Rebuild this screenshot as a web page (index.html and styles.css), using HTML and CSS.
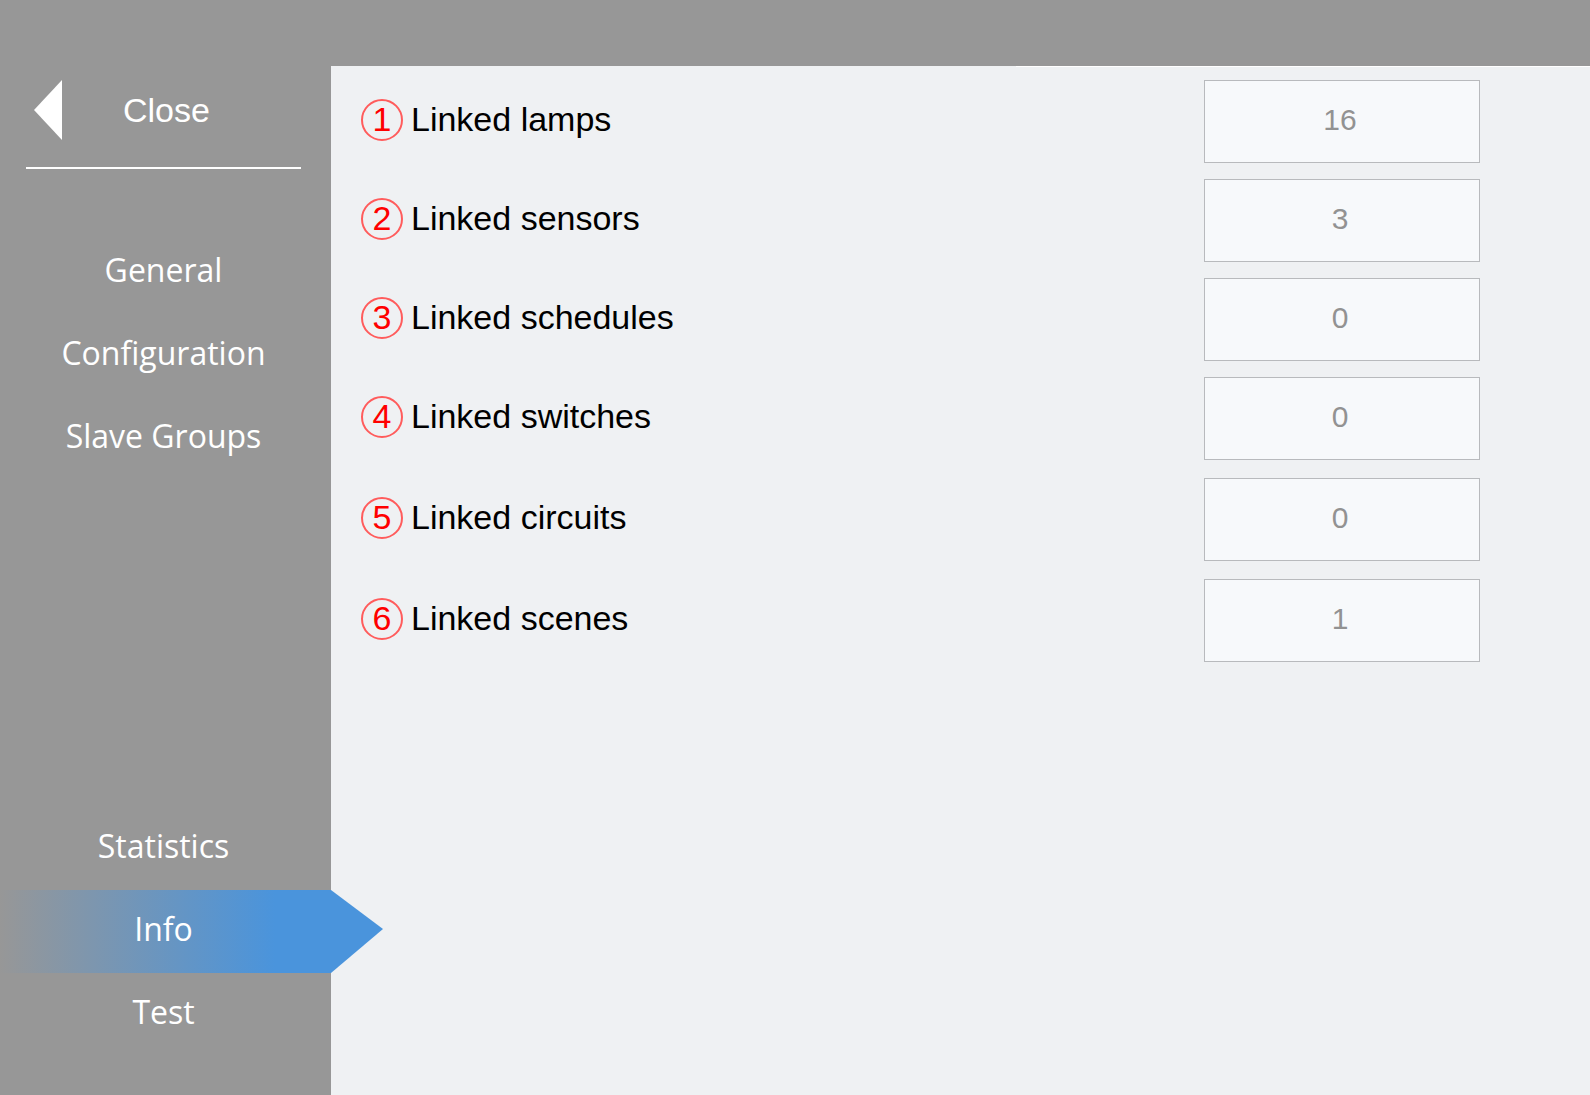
FILE: index.html
```html
<!DOCTYPE html>
<html lang="en">
<head>
    <meta charset="UTF-8">
    <meta name="viewport" content="width=device-width, initial-scale=1.0">
    <title>Info</title>
    <link rel="stylesheet" href="styles.css">
</head>
<body>

<header class="topbar"></header>

<div class="layout">
    <aside class="sidebar">
        <button class="close" type="button">
            <svg class="close-arrow" width="28" height="60" viewBox="0 0 28 60" aria-hidden="true">
                <polygon points="0,30 28,0 28,60" fill="#fff"/>
            </svg>
            <span class="close-text">Close</span>
        </button>

        <nav class="menu">
            <div class="menu-group">
                <a class="menu-item" href="#general">General</a>
                <a class="menu-item" href="#configuration">Configuration</a>
                <a class="menu-item" href="#slave-groups">Slave Groups</a>
            </div>
            <div class="menu-group">
                <a class="menu-item" href="#statistics">Statistics</a>
                <a class="menu-item active" href="#info">Info</a>
                <a class="menu-item" href="#test">Test</a>
            </div>
        </nav>
    </aside>

    <main class="content">
        <div class="row">
            <label class="row-label" for="lamps"><span class="number">1</span>Linked lamps</label>
            <input class="value" type="text" id="lamps" value="16" readonly>
        </div>
        <div class="row">
            <label class="row-label" for="sensors"><span class="number">2</span>Linked sensors</label>
            <input class="value" type="text" id="sensors" value="3" readonly>
        </div>
        <div class="row">
            <label class="row-label" for="schedules"><span class="number">3</span>Linked schedules</label>
            <input class="value" type="text" id="schedules" value="0" readonly>
        </div>
        <div class="row">
            <label class="row-label" for="switches"><span class="number">4</span>Linked switches</label>
            <input class="value" type="text" id="switches" value="0" readonly>
        </div>
        <div class="row row-spaced">
            <label class="row-label" for="circuits"><span class="number">5</span>Linked circuits</label>
            <input class="value" type="text" id="circuits" value="0" readonly>
        </div>
        <div class="row row-spaced">
            <label class="row-label" for="scenes"><span class="number">6</span>Linked scenes</label>
            <input class="value" type="text" id="scenes" value="1" readonly>
        </div>
    </main>
</div>

</body>
</html>
```
FILE: styles.css
```css
* {
    box-sizing: border-box;
}

body {
    display: flex;
    flex-direction: column;
    min-height: 100vh;
    margin: 0;
    font-family: "Liberation Sans", Arial, sans-serif;
    font-size: 34px;
    background-color: #eff1f3;
}

.topbar {
    height: 66px;
    background-color: #979797;
}

.layout {
    display: flex;
    flex: 1;
}

/* Sidebar */
.sidebar {
    display: flex;
    flex-direction: column;
    flex: 0 0 331px;
    background-color: #979797;
}

.close {
    display: flex;
    align-items: center;
    height: 103px;
    margin: 0 30px 0 26px;
    padding: 0 0 14px 8px;
    border: none;
    border-bottom: 2px solid #fff;
    background: none;
    color: #fff;
    font: inherit;
    cursor: pointer;
}

.close-text {
    padding: 2px 0 0 61px;
}

.menu {
    display: flex;
    flex: 1;
    flex-direction: column;
    justify-content: space-between;
    padding: 62px 0 39px;
}

.menu-item {
    display: flex;
    align-items: center;
    justify-content: center;
    height: 83px;
    padding: 0 4px 7px 0;
    color: #fff;
    font-family: "Segoe UI", "Open Sans", sans-serif;
    font-size: 32px;
    text-decoration: none;
}

/* Active item points into the content area */
.menu-item.active {
    margin-right: -52px;
    padding-right: 56px;
    background: linear-gradient(to right, #979797, #4a94dc 275px);
    clip-path: polygon(0 0, 331px 0, 100% 47%, 331px 100%, 0 100%);
}

/* Content */
.content {
    display: flex;
    flex: 1;
    flex-direction: column;
    gap: 16px;
    padding: 14px 110px 14px 30px;
    /* thin highlight under the right part of the top bar */
    background: linear-gradient(#fff, #fff) top right / 574px 1px no-repeat;
}

.row {
    display: flex;
    align-items: center;
    justify-content: space-between;
}

.row-spaced {
    margin-top: 2px;
}

.row-label {
    display: flex;
    align-items: center;
    gap: 8px;
    padding-bottom: 4px;
    color: #000;
}

.number {
    display: flex;
    align-items: center;
    justify-content: center;
    width: 42px;
    height: 42px;
    border: 2px solid #ff5c5c;
    border-radius: 50%;
    color: #ff0000;
}

.value {
    width: 276px;
    height: 83px;
    padding: 0 4px 4px 0;
    border: 1px solid #b8babd;
    background-color: #f7f9fb;
    color: #929292;
    font-family: inherit;
    font-size: 30px;
    text-align: center;
}
```
